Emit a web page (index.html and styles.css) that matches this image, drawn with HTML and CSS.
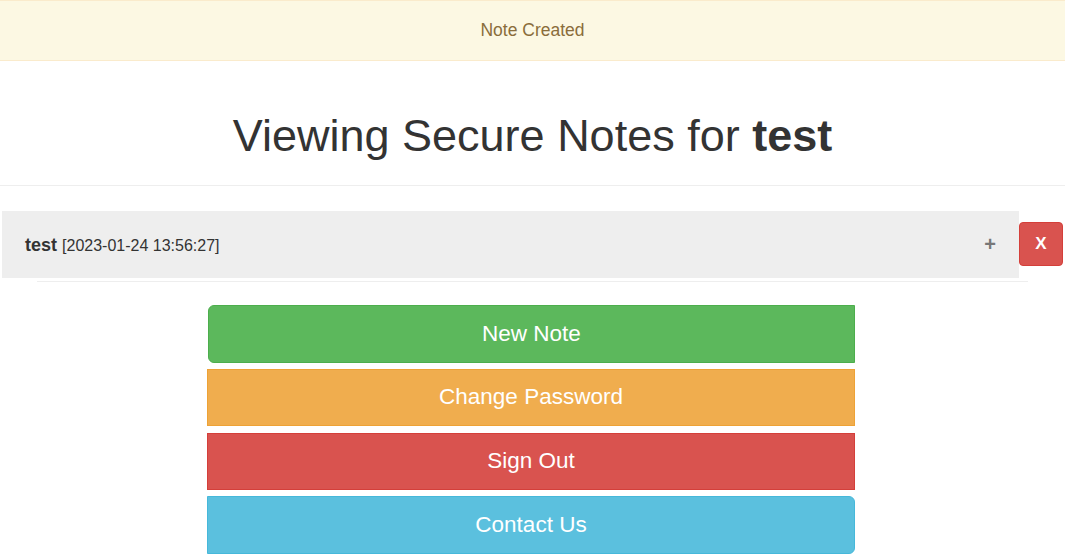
FILE: index.html
```html
<!DOCTYPE html>
<html>
<head>
<meta charset="utf-8">
<link rel="stylesheet" href="styles.css">
</head>
<body>
<div class="alert">Note Created</div>
<h1 class="title">Viewing Secure Notes for <b>test</b></h1>
<hr class="rule">
<div class="note-row">
  <div class="note">
    <span class="note-title"><b>test</b> <span class="date">[2023-01-24 13:56:27]</span></span>
    <span class="plus">+</span>
  </div>
  <button class="del">X</button>
</div>
<div class="note-line"></div>
<div class="actions">
  <button class="btn btn-green">New Note</button>
  <button class="btn btn-orange">Change Password</button>
  <button class="btn btn-red">Sign Out</button>
  <button class="btn btn-blue">Contact Us</button>
</div>
</body>
</html>
```
FILE: styles.css
```css
html, body {
  margin: 0;
  padding: 0;
  background: #fff;
  font-family: "Liberation Sans", Arial, sans-serif;
  color: #333;
}
.alert {
  box-sizing: border-box;
  height: 61px;
  background: #fcf8e3;
  border-top: 1px solid #faebcc;
  border-bottom: 1px solid #faebcc;
  color: #8a6d3b;
  font-size: 17.5px;
  display: flex;
  align-items: center;
  justify-content: center;
  padding-bottom: 1px;
}
.title {
  margin: 50px 0 0;
  font-size: 45px;
  line-height: 49.5px;
  font-weight: normal;
  text-align: center;
  color: #333;
}
.title b { font-weight: bold; }
.rule {
  margin: 24px 0 0;
  border: 0;
  height: 1px;
  background: #eee;
}
.note-row {
  display: flex;
  align-items: center;
  margin-top: 25px;
  padding-left: 2px;
}
.note {
  box-sizing: border-box;
  width: 1017px;
  height: 67px;
  background: #eee;
  display: flex;
  align-items: center;
  justify-content: space-between;
  padding: 0 23px 0 23px;
}
.note-title {
  font-size: 18px;
  color: #333;
  padding-top: 2px;
}
.note-title b { font-weight: bold; }
.date { font-size: 16px; }
.plus {
  font-size: 20px;
  font-weight: bold;
  color: #777;
  line-height: 1;
}
.del {
  box-sizing: border-box;
  width: 44px;
  height: 44px;
  background: #d9534f;
  border: 1px solid #d43f3a;
  border-radius: 4px;
  color: #fff;
  font-family: "Liberation Sans", Arial, sans-serif;
  font-size: 17px;
  font-weight: bold;
  padding: 0;
}
.note-line {
  height: 1px;
  background: #eee;
  margin: 3px 37px 0 37px;
  width: 991px;
}
.actions {
  display: flex;
  flex-direction: column;
  width: 648px;
  margin: 23px 0 0 207px;
}
.btn {
  box-sizing: border-box;
  height: 57px;
  width: 648px;
  border: 1px solid;
  border-radius: 0;
  color: #fff;
  font-family: "Liberation Sans", Arial, sans-serif;
  font-size: 22.5px;
  padding: 0;
}
.btn-green {
  background: #5cb85c;
  border-color: #4cae4c;
  border-radius: 6px 0 0 6px;
  margin-left: 1px;
  width: 647px;
  height: 58px;
}
.btn-orange { background: #f0ad4e; border-color: #eea236; margin-top: 6px; }
.btn-red { background: #d9534f; border-color: #d43f3a; margin-top: 7px; }
.btn-blue {
  background: #5bc0de;
  border-color: #46b8da;
  border-radius: 0 6px 6px 0;
  margin-top: 6px;
  height: 58px;
}
```
